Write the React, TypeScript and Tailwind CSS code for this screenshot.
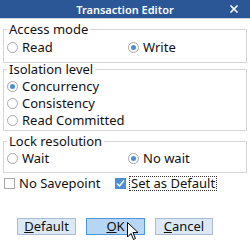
import { X } from 'lucide-react';

function Radio({ label, checked, width }: { label: string; checked?: boolean; width?: string }) {
  return (
    <div className={`flex items-center h-[17px] ${width ?? ''}`}>
      <span className="w-[11px] h-[11px] rounded-full border border-[#a8a8a8] bg-white flex items-center justify-center shrink-0">
        {checked && <span className="w-[5px] h-[5px] rounded-full bg-[#4a8ed4]" />}
      </span>
      <span className="ml-[4px] leading-none">{label}</span>
    </div>
  );
}

function Group({ title, className, children }: { title: string; className?: string; children: React.ReactNode }) {
  return (
    <fieldset className={`mx-[3px] border border-[#d6d6d6] pl-[3px] ${className ?? ''}`}>
      <legend className="px-[2px] leading-[12px]">{title}</legend>
      {children}
    </fieldset>
  );
}

export default function App() {
  return (
    <div
      className="relative w-[250px] h-[246px] bg-white text-[13px] text-[#111] overflow-hidden"
      style={{ fontFamily: '"Noto Sans", "Open Sans", sans-serif' }}
    >
      <div className="h-[19px] bg-[#2b5797] border-b border-[#cfd6e0] flex items-center justify-center relative">
        <span className="text-white text-[11px] font-semibold leading-none">Transaction Editor</span>
        <X className="absolute right-[10px] top-[3px] w-[12px] h-[12px] text-white" strokeWidth={3.5} />
      </div>

      <Group title="Access mode" className="mt-[4px] pb-[6px]">
        <div className="flex mt-[4px]">
          <Radio label="Read" width="w-[121px]" />
          <Radio label="Write" checked />
        </div>
      </Group>

      <Group title="Isolation level" className="pb-[1px]">
        <div className="flex flex-col mt-[3px]">
          <Radio label="Concurrency" checked />
          <Radio label="Consistency" />
          <Radio label="Read Committed" />
        </div>
      </Group>

      <Group title="Lock resolution" className="mt-[4px] pb-[5px]">
        <div className="flex mt-[3px]">
          <Radio label="Wait" width="w-[121px]" />
          <Radio label="No wait" checked />
        </div>
      </Group>

      <div className="flex items-center mt-[2px] h-[16px] pl-[4px]">
        <div className="flex items-center w-[111px]">
          <span className="w-[11px] h-[11px] border border-[#a8a8a8] bg-white shrink-0" />
          <span className="ml-[4px] leading-none">No Savepoint</span>
        </div>
        <div className="flex items-center">
          <span className="w-[11px] h-[11px] bg-[#4a8ed4] flex items-center justify-center shrink-0">
            <svg width="9" height="9" viewBox="0 0 9 9" fill="none">
              <path d="M1 4.5 L3.5 7 L8 1.5" stroke="white" strokeWidth="1.5" />
            </svg>
          </span>
          <span className="ml-[3px] px-[1px] leading-[13px] border border-dotted border-[#333]">Set as Default</span>
        </div>
      </div>

      <div className="flex mt-[27px] ml-[17px] gap-[10px]">
        <button className="w-[59px] h-[17px] bg-[#dce8f4] border border-[#aabcd3] leading-none">
          <span className="underline">D</span>efault
        </button>
        <button className="w-[59px] h-[17px] bg-[#b7d6f3] border border-[#4f95d8] leading-none">
          <span className="underline">O</span>K
        </button>
        <button className="w-[58px] h-[17px] bg-[#dce8f4] border border-[#aabcd3] leading-none">
          <span className="underline">C</span>ancel
        </button>
      </div>

      <svg className="absolute left-[127px] top-[222px]" width="12" height="20" viewBox="0 0 12 20">
        <path d="M0.5 0.5 L0.5 15 L4 11.5 L6.5 17.5 L8.5 16.5 L6 10.5 L11 10.5 Z" fill="white" stroke="black" strokeWidth="1" />
      </svg>
    </div>
  );
}
